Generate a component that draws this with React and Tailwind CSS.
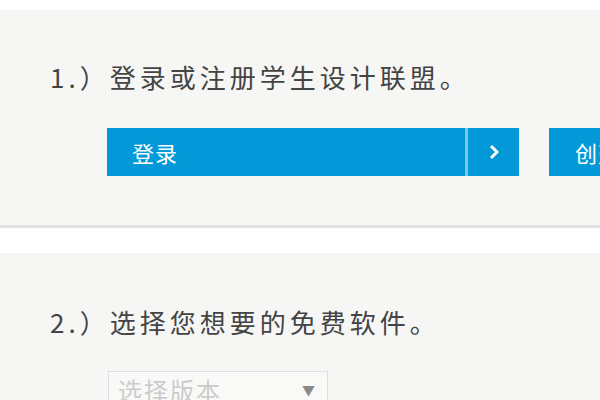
export default function App() {
  const font = { fontFamily: '"Noto Sans CJK SC", "Noto Sans", sans-serif' };

  return (
    <div className="w-[600px] h-[400px] overflow-hidden bg-white pt-[10px]" style={font}>
      {/* step 1 */}
      <div className="h-[218px] bg-[#f6f6f5] border-b-[3px] border-[#e2e2e2] pl-[50px] pt-[52px]">
        <p className="text-[26px] leading-[30px] tracking-[4px] text-[#444] whitespace-nowrap">
          1.）登录或注册学生设计联盟。
        </p>
        <div className="flex mt-[36px] ml-[57px] whitespace-nowrap">
          <button className="flex items-center shrink-0 w-[358px] h-[48px] bg-[#0399d8] text-white text-[22px] tracking-[1px] pl-[25px]">
            登录
          </button>
          <div className="shrink-0 w-[3px] h-[48px] bg-[#7cc6e9]" />
          <button className="flex items-center justify-center shrink-0 w-[51px] h-[48px] bg-[#0399d8]">
            <svg width="10" height="16" viewBox="0 0 10 16">
              <path d="M2 2 L8 8 L2 14" fill="none" stroke="white" strokeWidth="3" />
            </svg>
          </button>
          <button className="flex items-center shrink-0 w-[120px] h-[48px] ml-[30px] bg-[#0399d8] text-white text-[22px] tracking-[1px] pl-[26px]">
            创建
          </button>
        </div>
      </div>

      {/* spacer */}
      <div className="h-[25px] bg-white" />

      {/* step 2 */}
      <div className="h-[200px] bg-[#f6f6f5] pl-[50px] pt-[54px]">
        <p className="text-[26px] leading-[30px] tracking-[4px] text-[#444] whitespace-nowrap">
          2.）选择您想要的免费软件。
        </p>
        <div className="flex items-center justify-between w-[220px] h-[38px] mt-[34px] ml-[58px] border border-[#dedede] bg-[#f9f9f8] pl-[9px] pr-[12px]">
          <span className="text-[24px] tracking-[2px] text-[#cbcbcb]">选择版本</span>
          <span className="text-[13px] text-[#8a8a8a]">▼</span>
        </div>
      </div>
    </div>
  );
}
